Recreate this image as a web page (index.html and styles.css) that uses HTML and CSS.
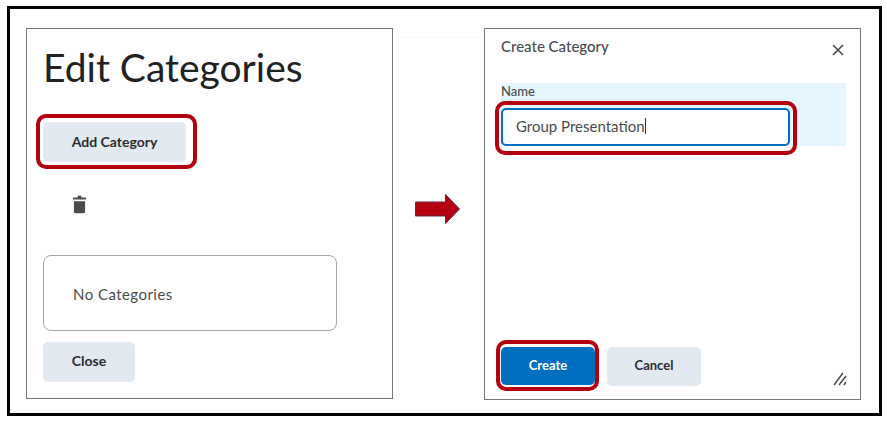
FILE: index.html
```html
<!DOCTYPE html>
<html lang="en">
<head>
    <meta charset="UTF-8">
    <title>Edit Categories</title>
    <link rel="stylesheet" href="styles.css">
</head>
<body>
    <div class="frame">
        <div class="panel panel-edit">
            <h1>Edit Categories</h1>
            <button class="btn btn-add callout">Add Category</button>
            <svg class="trash" width="13" height="19" viewBox="0 0 14 19">
                <path d="M5 0h4v2h5v2H0V2h5z" fill="#494c4e"/>
                <path d="M1 6h12v11a2 2 0 0 1-2 2H3a2 2 0 0 1-2-2z" fill="#494c4e"/>
            </svg>
            <div class="empty-list">No Categories</div>
            <button class="btn btn-close">Close</button>
        </div>

        <div class="arrow-col">
            <svg width="45" height="30" viewBox="0 0 45 30">
                <polygon points="0.5,8 30.5,8 30.5,0.5 44.5,15 30.5,29.5 30.5,22 0.5,22" fill="#b5000f" stroke="#5b2a4e" stroke-width="1"/>
            </svg>
        </div>

        <div class="panel panel-create">
            <div class="dialog-head">
                <span class="dialog-title">Create Category</span>
                <svg class="close-x" width="12" height="12" viewBox="0 0 12 12">
                    <path d="M1 1l10 10M11 1L1 11" stroke="#494c4e" stroke-width="1.6" fill="none"/>
                </svg>
            </div>
            <div class="field">
                <label for="name">Name</label>
                <div class="name-input callout">Group Presentation<span class="caret"></span></div>
            </div>
            <div class="dialog-foot">
                <button class="btn btn-primary callout">Create</button>
                <button class="btn btn-cancel">Cancel</button>
                <svg class="resize" width="14" height="14" viewBox="0 0 14 14">
                    <path d="M1 13L10 1M6 13l7-9M11 13l2-3" stroke="#494c4e" stroke-width="1.5" fill="none"/>
                </svg>
            </div>
        </div>
    </div>
</body>
</html>
```

FILE: styles.css
```css
html, body {
    margin: 0;
    padding: 0;
    background-color: white;
}
body {
    font-family: Lato, "Open Sans", sans-serif;
    color: #494c4e;
}
.frame {
    box-sizing: border-box;
    width: 875px;
    height: 410px;
    margin: 6px 0 0 7px;
    border: 3px solid black;
    padding: 19px 17px 0 16px;
    display: flex;
}
.panel {
    box-sizing: border-box;
    flex-shrink: 0;
    border: 1px solid #777;
    background-color: white;
}
.panel-edit {
    width: 367px;
    height: 371px;
    padding: 0 0 0 16px;
}
.panel-edit h1 {
    margin: 13px 0 0 0;
    font-size: 39px;
    line-height: 50px;
    font-weight: 400;
    color: #202122;
}
.btn {
    display: block;
    flex-shrink: 0;
    border: none;
    border-radius: 5px;
    background-color: #e3e9f1;
    color: #2a2c2e;
    font-family: inherit;
    font-size: 14px;
    font-weight: 700;
    padding: 0 0 2px;
}
/* red annotation boxes drawn over the screenshot */
.callout {
    position: relative;
}
.callout::after {
    content: "";
    position: absolute;
    border: 4px solid #b5000f;
    border-radius: 10px;
}
.btn-add {
    width: 143px;
    height: 40px;
    margin-top: 30px;
}
.btn-add::after {
    inset: -8px -11px -7px -7px;
}
.trash {
    display: block;
    margin: 33px 0 0 30px;
}
.empty-list {
    box-sizing: border-box;
    width: 294px;
    height: 76px;
    margin-top: 41px;
    padding: 2px 0 0 29px;
    border: 1px solid #a5a5a5;
    border-radius: 8px;
    display: flex;
    align-items: center;
    font-size: 15px;
    letter-spacing: 0.45px;
}
.btn-close {
    width: 92px;
    height: 40px;
    margin-top: 11px;
    padding-bottom: 4px;
}
.arrow-col {
    width: 91px;
    height: 353px;
    flex-shrink: 0;
    margin-top: 9px;
    padding: 156px 0 0 22px;
    box-sizing: border-box;
    border-top: 1px solid #f8f8f8;
}
.panel-create {
    width: 377px;
    height: 372px;
    padding: 0 14px 0 16px;
    display: flex;
    flex-direction: column;
}
.dialog-head {
    display: flex;
    justify-content: space-between;
    align-items: flex-start;
    height: 54px;
    padding-top: 9px;
    box-sizing: border-box;
}
.dialog-title {
    font-size: 15px;
    line-height: 17px;
    font-weight: 500;
}
.close-x {
    margin: 6px 2px 0 0;
}
.field {
    background-color: #e6f6fe;
    height: 63px;
}
.field label {
    display: block;
    font-size: 13px;
    line-height: 16px;
    font-weight: 500;
    margin-top: 0;
    padding-bottom: 9px;
}
.name-input {
    box-sizing: border-box;
    width: 289px;
    height: 38px;
    padding: 0 0 2px 13px;
    border: 2px solid #006fbf;
    border-radius: 5px;
    background-color: white;
    display: flex;
    align-items: center;
    font-size: 15px;
}
.name-input::after {
    inset: -9px -9px -11px -8px;
}
.caret {
    display: inline-block;
    width: 1px;
    height: 16px;
    background-color: #333;
}
.dialog-foot {
    display: flex;
    align-items: flex-start;
    gap: 12px;
    margin-top: 201px;
}
.btn-primary {
    width: 94px;
    height: 38px;
    background-color: #006fbf;
    color: white;
    font-size: 13px;
}
.btn-primary::after {
    inset: -7px -4px -6px -5px;
}
.btn-cancel {
    width: 94px;
    height: 39px;
    font-size: 13px;
    padding-bottom: 4px;
}
.resize {
    flex-shrink: 0;
    margin: 25px 0 0 120px;
}
```
